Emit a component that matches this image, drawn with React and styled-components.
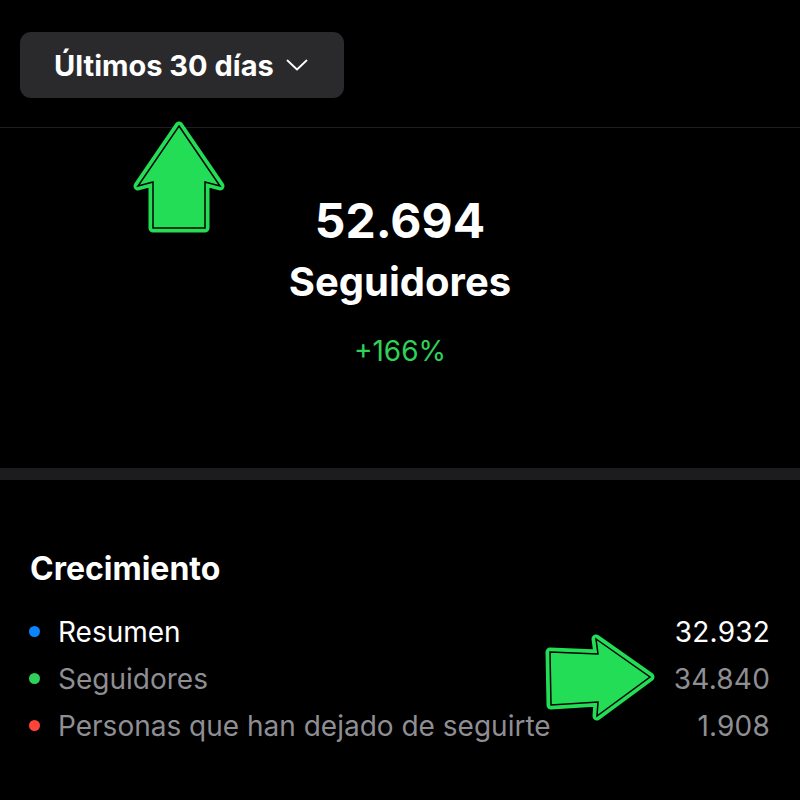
import React from 'react'
import styled, {createGlobalStyle} from 'styled-components'

const GlobalStyle = createGlobalStyle`
  html, body {
    margin: 0;
    padding: 0;
    background: #000;
  }
  body {
    font-family: Inter, "Liberation Sans", sans-serif;
    color: #fff;
  }
`

const Screen = styled.div`
  position: relative;
  width: 800px;
  height: 800px;
  overflow: hidden;
  background: #000;
`

const Header = styled.div`
  padding: 32px 20px 29px;
  border-bottom: 1px solid #1f1f21;
`

const RangeButton = styled.button`
  display: flex;
  align-items: center;
  gap: 12px;
  height: 66px;
  padding: 0 36px 0 34px;
  border: none;
  border-radius: 11px;
  background: #2a2a2c;
  color: #fff;
  font-family: Inter, "Liberation Sans", sans-serif;
  font-weight: 700;
  font-size: 29px;
  letter-spacing: 0px;
`

const Hero = styled.div`
  display: flex;
  flex-direction: column;
  align-items: center;
  height: 340px;
  padding-top: 64px;
  box-sizing: border-box;
`

const Total = styled.div`
  font-weight: 700;
  font-size: 48px;
  line-height: 58px;
`

const TotalLabel = styled.div`
  margin-top: 8px;
  font-weight: 700;
  font-size: 40px;
  line-height: 48px;
`

const Change = styled.div`
  margin-top: 28px;
  font-size: 28px;
  line-height: 34px;
  color: #30d158;
`

const ThickDivider = styled.div`
  height: 12px;
  background: #1c1c1e;
`

const Growth = styled.div`
  padding: 69px 30px 0 29px;
`

const GrowthTitle = styled.div`
  margin-left: 1px;
  margin-bottom: 19px;
  font-weight: 700;
  font-size: 32px;
  line-height: 40px;
`

const Row = styled.div`
  display: flex;
  align-items: center;
  height: 47px;
  font-size: 28px;
  color: ${(props) => props.muted ? '#8e8e93' : '#fff'};
`

const Dot = styled.span`
  width: 11px;
  height: 11px;
  border-radius: 50%;
  background: ${(props) => props.color};
  margin-right: 18px;
  flex-shrink: 0;
`

const RowLabel = styled.span`
  flex: 1;
`

const RowValue = styled.span`
  letter-spacing: 0.2px;
`

const Marker = styled.svg`
  position: absolute;
  pointer-events: none;
`

const ArrowShape = ({points}) => (
    <>
        <polygon points={points} fill="#22dd55" stroke="#22dd55" strokeWidth="9" strokeLinejoin="round"/>
        <polygon points={points} fill="#22dd55" stroke="#000" strokeWidth="1.5" strokeLinejoin="miter"/>
    </>
)

const rows = [
    {label: 'Resumen', value: '32.932', color: '#0a84ff'},
    {label: 'Seguidores', value: '34.840', color: '#30d158', muted: true},
    {label: 'Personas que han dejado de seguirte', value: '1.908', color: '#ff453a', muted: true},
]

const App = () => (
    <Screen>
        <GlobalStyle/>
        <Header>
            <RangeButton>
                Últimos 30 días
                <svg width="22" height="12" viewBox="0 0 22 12">
                    <path d="M1.5 1.5 L11 10.5 L20.5 1.5" fill="none" stroke="#fff" strokeWidth="1.8" strokeLinecap="round" strokeLinejoin="round"/>
                </svg>
            </RangeButton>
        </Header>
        <Hero>
            <Total>52.694</Total>
            <TotalLabel>Seguidores</TotalLabel>
            <Change>+166%</Change>
        </Hero>
        <ThickDivider/>
        <Growth>
            <GrowthTitle>Crecimiento</GrowthTitle>
            {rows.map(({label, value, color, muted}) => (
                <Row key={label} muted={muted}>
                    <Dot color={color}/>
                    <RowLabel>{label}</RowLabel>
                    <RowValue>{value}</RowValue>
                </Row>
            ))}
        </Growth>

        <Marker style={{left: 120, top: 110}} width="120" height="135" viewBox="120 110 120 135">
            <ArrowShape points="179,126 220,186 205,182 205,228 153,228 153,182 138,186"/>
        </Marker>
        <Marker style={{left: 535, top: 625}} width="130" height="105" viewBox="535 625 130 105">
            <ArrowShape points="550,652 598,654 596,639 650,677 597,716 598,702 551,705"/>
        </Marker>
    </Screen>
)

export default App
